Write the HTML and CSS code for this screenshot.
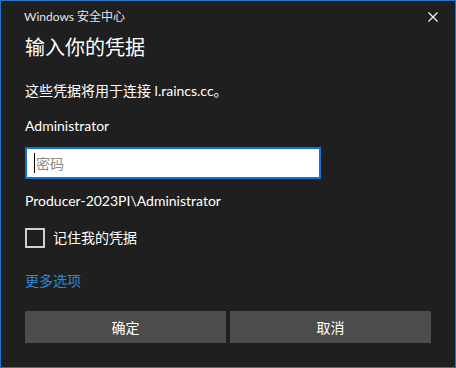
FILE: index.html
```html
<!DOCTYPE html>
<html lang="zh-CN">
<head>
<meta charset="utf-8">
<link rel="stylesheet" href="styles.css">
</head>
<body>
<div class="dialog">
  <div class="titlebar">
    <span class="title">Windows 安全中心</span>
    <svg class="close" width="10" height="10" viewBox="0 0 10 10"><path d="M0.5 0.5 L9.5 9.5 M9.5 0.5 L0.5 9.5" stroke="#ffffff" stroke-width="1.1" fill="none"/></svg>
  </div>
  <div class="content">
    <h1 class="heading">输入你的凭据</h1>
    <p class="text intro">这些凭据将用于连接 l.raincs.cc。</p>
    <p class="text user">Administrator</p>
    <div class="input"><span class="caret"></span><span class="placeholder">密码</span></div>
    <p class="text domain">Producer-2023PI\Administrator</p>
    <label class="check-row"><span class="checkbox"></span><span class="text">记住我的凭据</span></label>
    <a class="link">更多选项</a>
    <div class="buttons">
      <button class="btn">确定</button>
      <button class="btn">取消</button>
    </div>
  </div>
</div>
</body>
</html>
```
FILE: styles.css
```css
* { box-sizing: border-box; }
html, body { margin: 0; padding: 0; background: #1f1f1f; }
body { font-family: "Segoe UI", Lato, "Noto Sans CJK SC", sans-serif; color: #ffffff; }
.dialog {
  width: 456px; height: 368px;
  border: 1px solid #1a78d4;
  background: #1f1f1f;
  display: flex; flex-direction: column;
}
.titlebar {
  height: 32px;
  display: flex; align-items: center; justify-content: space-between;
  padding: 0 17px 0 23px;
}
.title { font-size: 12px; line-height: 30px; color: #e6e6e6; }
.close { display: block; margin-top: -1px; }
.content { padding: 0 24px; display: flex; flex-direction: column; }
.heading { margin: 0; font-size: 20px; font-weight: normal; line-height: 28px; }
.text { margin: 0; font-size: 14px; line-height: 20px; }
.intro { margin-top: 20px; }
.user { margin-top: 15px; }
.input {
  margin-top: 11px; width: 296px; height: 32px;
  border: 2px solid #0a74d8; background: #ffffff;
  display: flex; align-items: center; padding-left: 7px;
}
.caret { width: 1px; height: 20px; background: #000; margin-right: 1px; }
.placeholder { font-size: 14px; color: #8a8a8a; }
.domain { margin-top: 12px; }
.check-row { margin-top: 17px; display: flex; align-items: center; height: 20px; }
.checkbox { width: 20px; height: 20px; border: 2px solid #cfcfcf; margin-right: 8px; }
.link { margin-top: 23px; font-size: 14px; line-height: 20px; color: #2a88d8; }
.buttons { margin-top: 20px; display: flex; gap: 4px; }
.btn {
  flex: 1; height: 32px; border: none; background: #4c4c4c; color: #ffffff;
  font-family: inherit; font-size: 14px; padding: 0;
}
```
